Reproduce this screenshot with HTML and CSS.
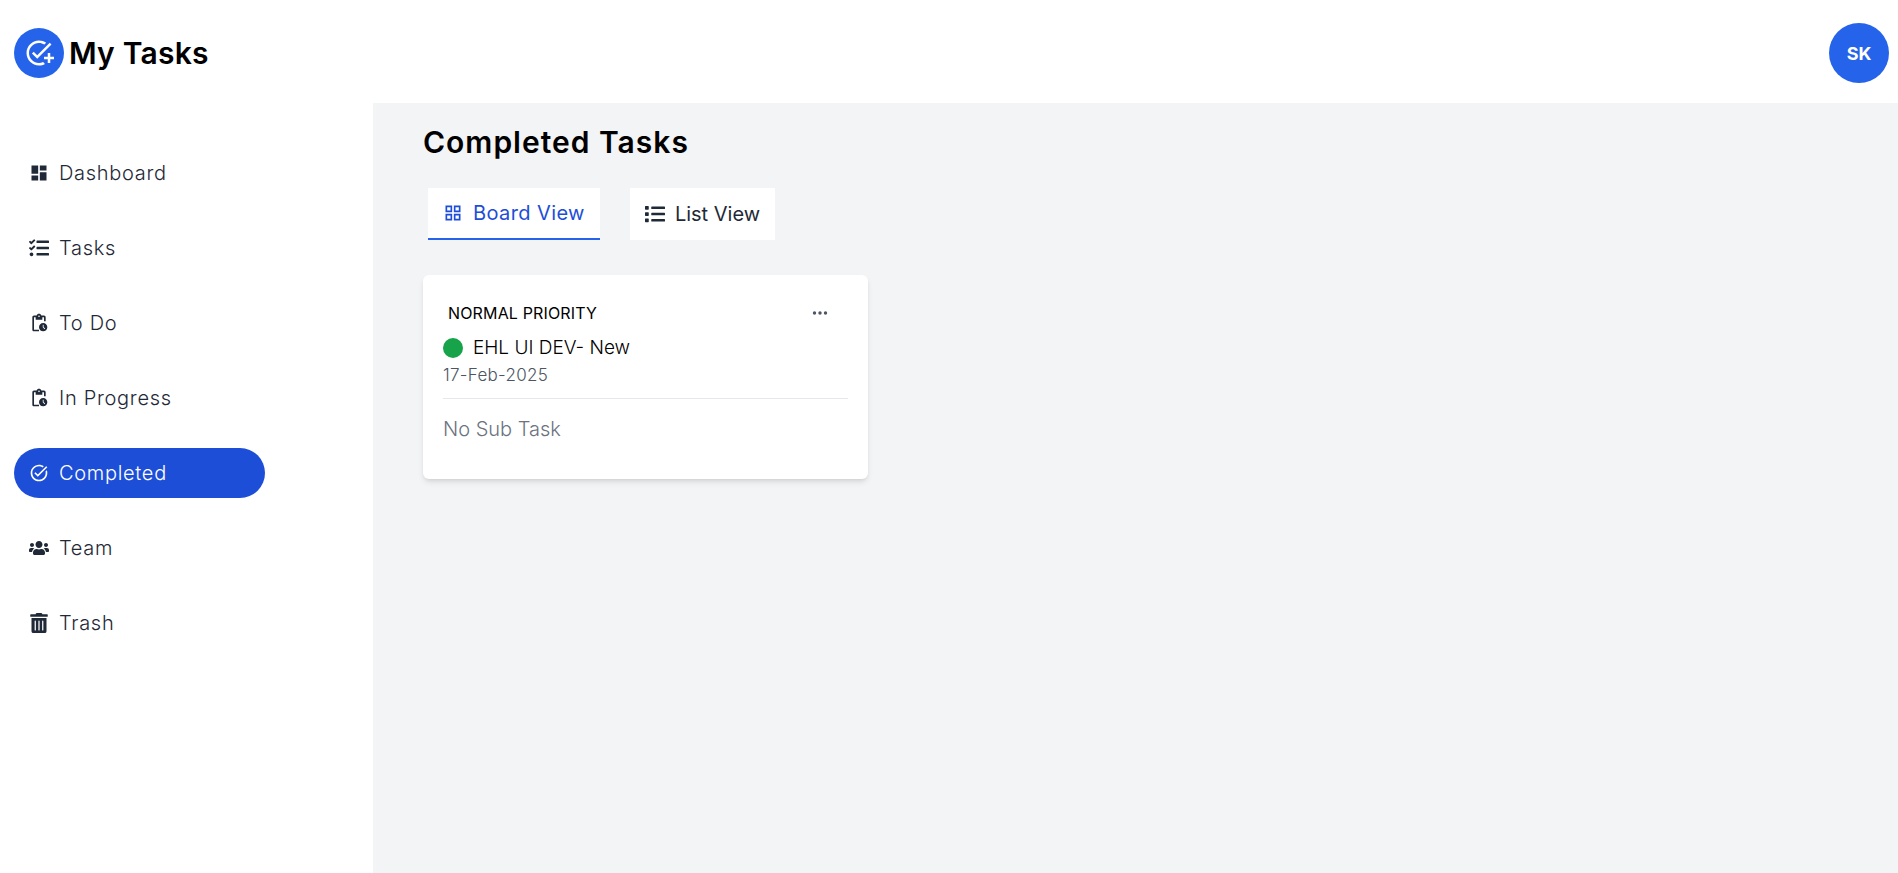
FILE: index.html
```html
<!DOCTYPE html>
<html lang="en">
  <head>
    <meta charset="UTF-8" />
    <title>My Tasks</title>
    <link rel="stylesheet" href="styles.css">
  </head>
  <body>
    <header class="topbar">
      <div class="brand">
        <span class="brand-icon">
          <svg viewBox="0 0 24 24" width="30" height="30" fill="currentColor"><path d="M22,5.18L10.59,16.6l-4.24-4.24l1.41-1.41l2.83,2.83l10-10L22,5.18z M12,20c-4.41,0-8-3.59-8-8s3.59-8,8-8c1.57,0,3.04,0.46,4.28,1.25l1.45-1.45C16.1,2.67,14.13,2,12,2C6.48,2,2,6.48,2,12s4.48,10,10,10c1.73,0,3.36-0.44,4.78-1.22l-1.5-1.5C14.28,19.74,13.17,20,12,20z M19,15h-3v2h3v3h2v-3h3v-2h-3v-3h-2V15z"/></svg>
        </span>
        <span class="brand-name">My Tasks</span>
      </div>
      <div class="avatar">SK</div>
    </header>
    <div class="layout">
      <nav class="sidebar">
        <a class="nav-item">
          <svg class="nav-icon" viewBox="0 0 24 24" fill="currentColor"><path d="M3 13h8V3H3v10zm0 8h8v-6H3v6zm10 0h8V11h-8v10zm0-18v6h8V3h-8z"/></svg>
          <span>Dashboard</span>
        </a>
        <a class="nav-item">
          <svg class="nav-icon" viewBox="0 0 512 512" fill="currentColor"><path d="M139.61 35.5a12 12 0 0 0-17 0L58.93 98.81l-22.7-22.12a12 12 0 0 0-17 0L3.53 92.41a12 12 0 0 0 0 17l47.59 47.4a12.78 12.78 0 0 0 17.61 0l15.59-15.62L156.52 69a12.09 12.09 0 0 0 .09-17zm0 159.19a12 12 0 0 0-17 0l-63.68 63.72-22.7-22.1a12 12 0 0 0-17 0L3.53 252a12 12 0 0 0 0 17L51 316.5a12.77 12.77 0 0 0 17.6 0l15.7-15.69 72.2-72.22a12 12 0 0 0 .09-16.9zM64 368c-26.49 0-48.59 21.5-48.59 48S37.53 464 64 464a48 48 0 0 0 0-96zm432 16H208a16 16 0 0 0-16 16v32a16 16 0 0 0 16 16h288a16 16 0 0 0 16-16v-32a16 16 0 0 0-16-16zm0-320H208a16 16 0 0 0-16 16v32a16 16 0 0 0 16 16h288a16 16 0 0 0 16-16V80a16 16 0 0 0-16-16zm0 160H208a16 16 0 0 0-16 16v32a16 16 0 0 0 16 16h288a16 16 0 0 0 16-16v-32a16 16 0 0 0-16-16z"/></svg>
          <span>Tasks</span>
        </a>
        <a class="nav-item">
          <svg class="nav-icon" viewBox="0 0 24 24" fill="currentColor"><path d="M17 12c-2.76 0-5 2.24-5 5s2.24 5 5 5 5-2.24 5-5-2.24-5-5-5zm1.65 7.35L16.5 17.2V14h1v2.79l1.85 1.85-.7.71zM18 3h-3.18C14.4 1.84 13.3 1 12 1s-2.4.84-2.82 2H6c-1.1 0-2 .9-2 2v15c0 1.1.9 2 2 2h6v-2H6V5h2v3h8V5h2v5h2V5c0-1.1-.9-2-2-2zm-6 2c-.55 0-1-.45-1-1s.45-1 1-1 1 .45 1 1-.45 1-1 1z"/></svg>
          <span>To Do</span>
        </a>
        <a class="nav-item">
          <svg class="nav-icon" viewBox="0 0 24 24" fill="currentColor"><path d="M17 12c-2.76 0-5 2.24-5 5s2.24 5 5 5 5-2.24 5-5-2.24-5-5-5zm1.65 7.35L16.5 17.2V14h1v2.79l1.85 1.85-.7.71zM18 3h-3.18C14.4 1.84 13.3 1 12 1s-2.4.84-2.82 2H6c-1.1 0-2 .9-2 2v15c0 1.1.9 2 2 2h6v-2H6V5h2v3h8V5h2v5h2V5c0-1.1-.9-2-2-2zm-6 2c-.55 0-1-.45-1-1s.45-1 1-1 1 .45 1 1-.45 1-1 1z"/></svg>
          <span>In Progress</span>
        </a>
        <a class="nav-item active">
          <svg class="nav-icon" viewBox="0 0 24 24" fill="currentColor"><path d="M22 5.18 10.59 16.6l-4.24-4.24 1.41-1.41 2.83 2.83 10-10L22 5.18zm-2.21 5.04c.13.57.21 1.17.21 1.78 0 4.42-3.58 8-8 8s-8-3.58-8-8 3.58-8 8-8c1.58 0 3.04.46 4.28 1.25l1.44-1.44C16.1 2.67 14.13 2 12 2 6.48 2 2 6.48 2 12s4.48 10 10 10 10-4.48 10-10c0-1.19-.22-2.33-.6-3.39l-1.61 1.61z"/></svg>
          <span>Completed</span>
        </a>
        <a class="nav-item">
          <svg class="nav-icon" viewBox="0 0 640 512" fill="currentColor"><path d="M96 224c35.3 0 64-28.7 64-64s-28.7-64-64-64-64 28.7-64 64 28.7 64 64 64zm448 0c35.3 0 64-28.7 64-64s-28.7-64-64-64-64 28.7-64 64 28.7 64 64 64zm32 32h-64c-17.6 0-33.5 7.1-45.1 18.6 40.3 22.1 68.9 62 75.1 109.4h66c17.7 0 32-14.3 32-32v-32c0-35.3-28.7-64-64-64zm-256 0c61.9 0 112-50.1 112-112S381.9 32 320 32 208 82.1 208 144s50.1 112 112 112zm76.8 32h-8.3c-20.8 10-43.9 16-68.5 16s-47.6-6-68.5-16h-8.3C179.6 288 128 339.6 128 403.2V432c0 26.5 21.5 48 48 48h288c26.5 0 48-21.5 48-48v-28.8c0-63.6-51.6-115.2-115.2-115.2zm-223.7-13.4C161.5 263.1 145.6 256 128 256H64c-35.3 0-64 28.7-64 64v32c0 17.7 14.3 32 32 32h65.9c6.3-47.4 34.9-87.3 75.2-109.4z"/></svg>
          <span>Team</span>
        </a>
        <a class="nav-item">
          <svg class="nav-icon" viewBox="0 0 448 512" fill="currentColor"><path d="M32 464a48 48 0 0 0 48 48h288a48 48 0 0 0 48-48V128H32zm272-256a16 16 0 0 1 32 0v224a16 16 0 0 1-32 0zm-96 0a16 16 0 0 1 32 0v224a16 16 0 0 1-32 0zm-96 0a16 16 0 0 1 32 0v224a16 16 0 0 1-32 0zM432 32H312l-9.4-18.7A24 24 0 0 0 281.1 0H166.8a23.72 23.72 0 0 0-21.4 13.3L136 32H16A16 16 0 0 0 0 48v32a16 16 0 0 0 16 16h416a16 16 0 0 0 16-16V48a16 16 0 0 0-16-16z"/></svg>
          <span>Trash</span>
        </a>
      </nav>
      <main class="content">
        <h1 class="page-title">Completed Tasks</h1>
        <div class="tabs">
          <button class="tab tab-active">
            <svg class="tab-icon" viewBox="0 0 24 24" fill="currentColor"><path d="M3 3v8h8V3H3zm6 6H5V5h4v4zm-6 4v8h8v-8H3zm6 6H5v-4h4v4zm4-16v8h8V3h-8zm6 6h-4V5h4v4zm-6 4v8h8v-8h-8zm6 6h-4v-4h4v4z"/></svg>
            Board View
          </button>
          <button class="tab">
            <svg class="tab-icon" viewBox="0 0 512 512" fill="currentColor"><path d="M80 368H16a16 16 0 0 0-16 16v64a16 16 0 0 0 16 16h64a16 16 0 0 0 16-16v-64a16 16 0 0 0-16-16zm0-320H16A16 16 0 0 0 0 64v64a16 16 0 0 0 16 16h64a16 16 0 0 0 16-16V64a16 16 0 0 0-16-16zm0 160H16a16 16 0 0 0-16 16v64a16 16 0 0 0 16 16h64a16 16 0 0 0 16-16v-64a16 16 0 0 0-16-16zm416 176H176a16 16 0 0 0-16 16v32a16 16 0 0 0 16 16h320a16 16 0 0 0 16-16v-32a16 16 0 0 0-16-16zm0-320H176a16 16 0 0 0-16 16v32a16 16 0 0 0 16 16h320a16 16 0 0 0 16-16V80a16 16 0 0 0-16-16zm0 160H176a16 16 0 0 0-16 16v32a16 16 0 0 0 16 16h320a16 16 0 0 0 16-16v-32a16 16 0 0 0-16-16z"/></svg>
            List View
          </button>
        </div>
        <div class="board">
          <article class="card">
            <div class="card-top">
              <span class="priority">NORMAL PRIORITY</span>
              <svg class="menu-dots" viewBox="0 0 16 16" fill="currentColor"><circle cx="2.5" cy="8" r="1.7"/><circle cx="8" cy="8" r="1.7"/><circle cx="13.5" cy="8" r="1.7"/></svg>
            </div>
            <div class="card-title">
              <span class="status-dot"></span>
              <span>EHL UI DEV- New</span>
            </div>
            <div class="card-date">17-Feb-2025</div>
            <div class="card-sub">No Sub Task</div>
          </article>
        </div>
      </main>
    </div>
  </body>
</html>
```

FILE: styles.css
```css
* {
  box-sizing: border-box;
}

html,
body {
  height: 100%;
}

body {
  margin: 0;
  display: flex;
  flex-direction: column;
  background: #fff;
  color: #000;
  font-family: "Inter", "Liberation Sans", sans-serif;
  overflow: hidden;
}

.topbar {
  height: 103px;
  flex: none;
  display: flex;
  align-items: center;
  justify-content: space-between;
  padding: 3px 9px 0 14px;
}

.brand {
  display: flex;
  align-items: center;
  gap: 5px;
}

.brand-icon {
  width: 50px;
  height: 50px;
  border-radius: 50%;
  background: #2563eb;
  color: #fff;
  display: flex;
  align-items: center;
  justify-content: center;
}

.brand-name {
  font-size: 30px;
  font-weight: 600;
  letter-spacing: 0.2px;
}

.avatar {
  width: 60px;
  height: 60px;
  border-radius: 50%;
  background: #2563eb;
  color: #fff;
  display: flex;
  align-items: center;
  justify-content: center;
  font-size: 18px;
  font-weight: 700;
}

.layout {
  flex: 1;
  display: flex;
  min-height: 0;
}

.sidebar {
  width: 373px;
  flex: none;
  display: flex;
  flex-direction: column;
  align-items: flex-start;
  gap: 25px;
  padding: 45px 0 0 14px;
}

.nav-item {
  width: 251px;
  height: 50px;
  display: flex;
  align-items: center;
  gap: 10px;
  padding-left: 15px;
  border-radius: 25px;
  color: #1f2937;
  font-size: 20px;
  font-weight: 300;
  letter-spacing: 0.7px;
}

.nav-item.active {
  background: #1d4ed8;
  color: #fff;
}

.nav-icon {
  width: 20px;
  height: 20px;
  flex: none;
}

.content {
  flex: 1;
  background: #f3f4f6;
  padding: 20px 0 0 50px;
}

.page-title {
  margin: 0;
  font-size: 30px;
  line-height: 38px;
  font-weight: 600;
  letter-spacing: 1px;
}

.tabs {
  display: flex;
  gap: 30px;
  margin: 27px 0 0 5px;
}

.tab {
  height: 52px;
  display: flex;
  align-items: center;
  gap: 10px;
  padding: 0 15px;
  border: none;
  background: #fff;
  color: #1f2937;
  font-family: inherit;
  font-size: 20px;
  font-weight: 400;
}

.tab-active {
  color: #1d4ed8;
  letter-spacing: 0.4px;
  border-bottom: 2px solid #2563eb;
}

.tab-icon {
  width: 20px;
  height: 20px;
  flex: none;
}

.board {
  margin-top: 35px;
}

.card {
  width: 445px;
  height: 204px;
  background: #fff;
  border-radius: 6px;
  box-shadow: 0 4px 6px -1px rgba(0, 0, 0, 0.1), 0 2px 4px -2px rgba(0, 0, 0, 0.1);
  padding: 27px 20px 0;
}

.card-top {
  display: flex;
  align-items: center;
  justify-content: space-between;
  height: 22px;
  padding: 0 20px 0 5px;
}

.priority {
  font-size: 16px;
  font-weight: 400;
  letter-spacing: 0.15px;
}

.menu-dots {
  width: 16px;
  height: 16px;
  color: #4b5563;
}

.card-title {
  display: flex;
  align-items: center;
  gap: 10px;
  margin-top: 11px;
  font-size: 19px;
  font-weight: 300;
  line-height: 26px;
}

.status-dot {
  width: 20px;
  height: 20px;
  border-radius: 50%;
  background: #16a34a;
}

.card-date {
  margin-top: 2px;
  padding-bottom: 11px;
  border-bottom: 1px solid #e5e7eb;
  color: #4b5563;
  font-size: 17px;
  font-weight: 300;
  letter-spacing: 0.3px;
  line-height: 24px;
}

.card-sub {
  margin-top: 17px;
  color: #6b7280;
  font-size: 20px;
  font-weight: 300;
  line-height: 26px;
}
```
